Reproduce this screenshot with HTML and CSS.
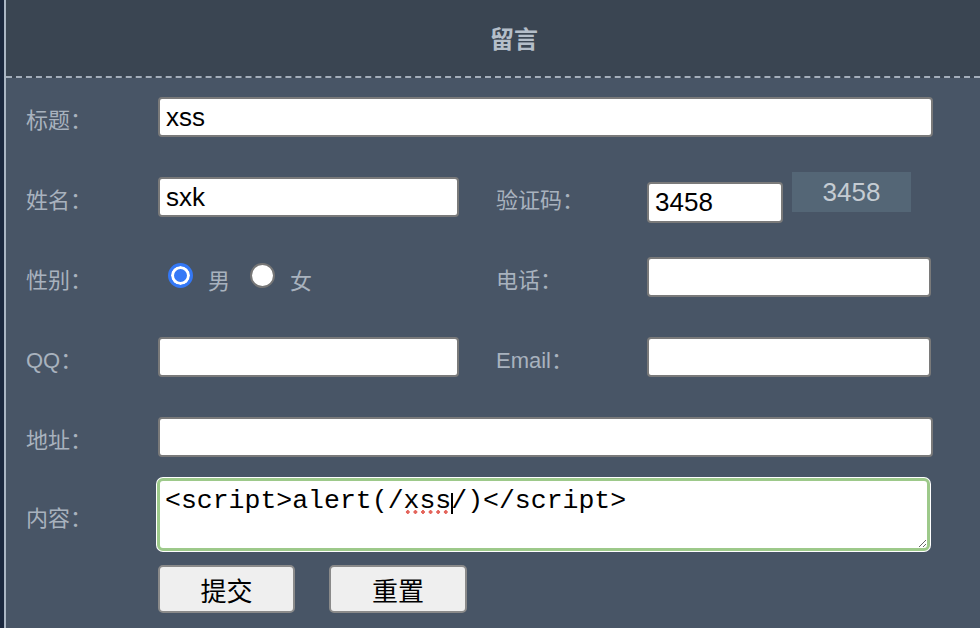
FILE: index.html
```html
<!DOCTYPE html>
<html lang="zh-CN">
<head>
<meta charset="utf-8">
<title>留言</title>
<link rel="stylesheet" href="styles.css">
</head>
<body>
<div class="page">
  <div class="panel">
    <div class="header"><h1 class="title">留言</h1></div>
    <form class="form">
      <div class="row">
        <label class="lbl">标题：</label>
        <input class="field field-full" type="text" value="xss">
      </div>
      <div class="row">
        <label class="lbl">姓名：</label>
        <div class="half"><input class="field field-half" type="text" value="sxk"></div>
        <label class="lbl lbl2">验证码：</label>
        <input class="field field-code" type="text" value="3458">
        <span class="captcha">3458</span>
      </div>
      <div class="row">
        <label class="lbl">性别：</label>
        <div class="half radios">
          <input class="radio" type="radio" name="sex" checked>
          <span class="radio-text">男</span>
          <input class="radio" type="radio" name="sex">
          <span class="radio-text">女</span>
        </div>
        <label class="lbl lbl2">电话：</label>
        <input class="field field-side" type="text">
      </div>
      <div class="row">
        <label class="lbl">QQ：</label>
        <div class="half"><input class="field field-half" type="text"></div>
        <label class="lbl lbl2">Email：</label>
        <input class="field field-side" type="text">
      </div>
      <div class="row row-addr">
        <label class="lbl">地址：</label>
        <input class="field field-full" type="text">
      </div>
      <div class="row row-text">
        <label class="lbl">内容：</label>
        <div class="area-wrap">
          <textarea class="area" spellcheck="false">&lt;script&gt;alert(/xss/)&lt;/script&gt;</textarea>
          <span class="squiggle"></span>
          <span class="caret"></span>
        </div>
      </div>
      <div class="row row-btns">
        <button class="btn" type="button">提交</button>
        <button class="btn" type="reset">重置</button>
      </div>
    </form>
  </div>
</div>
</body>
</html>
```
FILE: styles.css
```css
html, body {
  margin: 0;
  padding: 0;
  background: #485566;
}
.page {
  display: flex;
  min-height: 100vh;
  background: #1b283e;
  padding-left: 4px;
}
.panel {
  flex: 1;
  border-left: 2px solid #aab6c4;
  background: #485566;
  font-family: "Liberation Sans", "Noto Sans CJK SC", sans-serif;
}
.header {
  height: 76px;
  background: #3a4552;
  border-bottom: 2px dashed #a4aebb;
  display: flex;
  align-items: center;
  justify-content: center;
  padding-left: 42px;
}
.title {
  margin: 0;
  font-family: "Noto Sans CJK SC", sans-serif;
  font-size: 24px;
  font-weight: bold;
  color: #b4bec9;
  line-height: 1;
}
.form {
  padding: 19px 0 0 20px;
}
.row {
  display: flex;
  align-items: center;
  height: 40px;
  margin-bottom: 40px;
}
.row-addr { margin-bottom: 20px; }
.row-text { height: 75px; margin-bottom: 13px; }
.row-btns { height: 48px; margin-bottom: 0; padding-left: 132px; }
.lbl {
  width: 132px;
  flex-shrink: 0;
  font-size: 22px;
  color: #a8b2be;
  padding-top: 2px;
}
.lbl2 { width: 151px; }
.half {
  width: 338px;
  flex-shrink: 0;
  display: flex;
  align-items: center;
}
.field {
  box-sizing: border-box;
  height: 40px;
  margin: 0;
  border: 2px solid #7a7a7a;
  border-radius: 4px;
  background: #fff;
  padding: 0 6px;
  font-family: "Liberation Sans", sans-serif;
  font-size: 26px;
  color: #000;
  outline: none;
}
.field-full { width: 775px; }
.field-half { width: 301px; }
.field-side { width: 284px; }
.field-code {
  width: 136px;
  height: 41px;
  margin-top: 10px;
}
.captcha {
  box-sizing: border-box;
  width: 119px;
  height: 40px;
  margin-left: 9px;
  margin-bottom: 10px;
  background: #546676;
  color: #c5ccd3;
  font-family: "Liberation Sans", sans-serif;
  font-size: 26px;
  display: flex;
  align-items: center;
  justify-content: center;
}
.radios {
  padding-left: 10px;
  box-sizing: border-box;
}
.radio {
  -webkit-appearance: none;
  appearance: none;
  box-sizing: border-box;
  width: 25px;
  height: 25px;
  margin: 0 0 4px 0;
  border-radius: 50%;
  border: 2px solid #767676;
  background: #fff;
}
.radio:checked {
  border: 3px solid #3478f6;
  background: #3478f6;
  box-shadow: inset 0 0 0 3px #fff;
}
.radio-text {
  font-size: 22px;
  color: #a8b2be;
  margin-left: 15px;
  margin-right: 20px;
  padding-top: 4px;
}
.area-wrap {
  position: relative;
  width: 773px;
  height: 73px;
  margin-left: -1px;
}
.area {
  box-sizing: border-box;
  display: block;
  width: 773px;
  height: 73px;
  margin: 0;
  border: 3px solid #9dc98a;
  border-radius: 6px;
  box-shadow: 0 0 0 1px #fff;
  padding: 5px 5px;
  font-family: "Liberation Mono", monospace;
  font-size: 26.5px;
  line-height: 30px;
  color: #000;
  background: #fff;
  outline: none;
}
.squiggle {
  position: absolute;
  left: 247px;
  top: 32px;
  width: 46px;
  height: 4px;
  background: radial-gradient(circle, #e4655c 1.6px, transparent 2px) 0 0 / 7.6px 4px repeat-x;
}
.caret {
  position: absolute;
  left: 294px;
  top: 15px;
  width: 1.5px;
  height: 21px;
  background: #000;
}
.btn {
  box-sizing: border-box;
  width: 137px;
  height: 48px;
  margin: 0 34px 0 0;
  padding: 0;
  background: #efefef;
  border: 2px solid #8a8a8a;
  border-radius: 5px;
  font-family: "Noto Sans CJK SC", sans-serif;
  font-size: 26px;
  color: #000;
}
.btn + .btn { width: 138px; }
```
